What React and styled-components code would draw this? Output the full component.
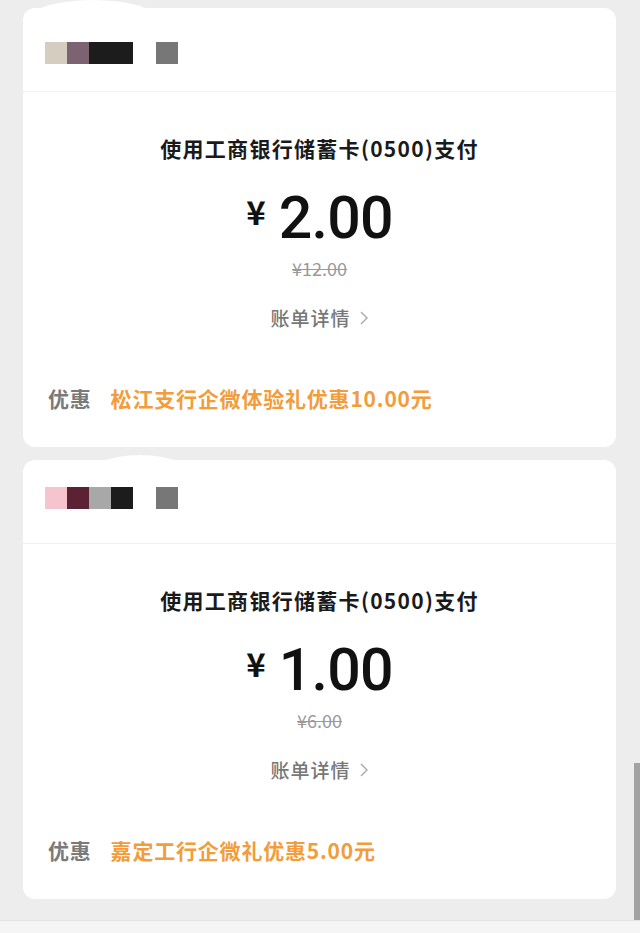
import styled, { createGlobalStyle } from "styled-components";

const GlobalStyle = createGlobalStyle`
  html, body {
    margin: 0;
    padding: 0;
    background: #ededed;
  }
  body {
    font-family: "Noto Sans CJK SC", "Noto Sans", sans-serif;
  }
`;

const Page = styled.div`
  position: relative;
  width: 640px;
  height: 933px;
  overflow: hidden;
  background: #ededed;
  display: flex;
  flex-direction: column;
`;

const List = styled.div`
  display: flex;
  flex-direction: column;
  gap: 13px;
  padding: 8px 24px 0 23px;
  flex: 1;
`;

const Card = styled.div`
  position: relative;
  background: #fff;
  border-radius: 12px;
  height: 439px;
  display: flex;
  flex-direction: column;
`;

// white blur left over from the redacted shop name
const Smudge = styled.div`
  position: absolute;
  top: ${(p) => p.$top}px;
  left: ${(p) => p.$left}px;
  width: ${(p) => p.$width}px;
  height: 24px;
  border-radius: 50% 50% 0 0 / 100% 100% 0 0;
  background: #fff;
`;

const Header = styled.div`
  height: 84px;
  box-sizing: border-box;
  padding: ${(p) => p.$offset}px 0 0 22px;
  border-bottom: 1px solid #f1f1f1;
  display: flex;
  align-items: flex-start;
`;

const Pixel = styled.span`
  display: block;
  width: ${(p) => p.$w || 22}px;
  height: 22px;
  margin-right: ${(p) => p.$gap || 0}px;
  background: ${(p) => p.$color};
`;

const Body = styled.div`
  display: flex;
  flex-direction: column;
  align-items: center;
  padding: 41px 25px 0;
`;

const Title = styled.div`
  font-size: 21px;
  line-height: 30px;
  font-weight: 700;
  letter-spacing: 1.3px;
  color: #1a1a1a;
`;

const Amount = styled.div`
  display: flex;
  align-items: flex-start;
  margin-top: 24px;
  height: 62px;
  color: #111;
`;

const Yen = styled.span`
  font-family: "Noto Sans CJK SC", sans-serif;
  font-size: 33px;
  line-height: 40px;
  font-weight: 700;
  margin: 4px 13px 0 0;
`;

const Digits = styled.span`
  font-family: Roboto, "Noto Sans", sans-serif;
  font-size: 59px;
  line-height: 62px;
  font-weight: 500;
  letter-spacing: -0.8px;
`;

const Original = styled.div`
  margin-top: 7px;
  font-size: 18px;
  line-height: 24px;
  color: #9a9a9a;
  text-decoration: line-through;
  text-decoration-thickness: 1px;
`;

const Details = styled.div`
  margin-top: 24px;
  display: flex;
  align-items: center;
  gap: 8px;
  font-size: 19px;
  line-height: 28px;
  font-weight: 500;
  letter-spacing: 1px;
  color: #777;
`;

const Promo = styled.div`
  align-self: stretch;
  margin-top: 52px;
  display: flex;
  align-items: center;
  gap: 19px;
  font-size: 21px;
  line-height: 28px;
  font-weight: 700;
  letter-spacing: 0.8px;
`;

const PromoLabel = styled.span`
  color: #7a7a7a;
`;

const PromoText = styled.span`
  color: #f29c3a;
`;

const Footer = styled.div`
  height: 13px;
  margin-top: 21px;
  background: #f5f5f5;
  border-top: 1px solid #e2e2e2;
`;

const ScrollThumb = styled.div`
  position: absolute;
  right: 0;
  top: 763px;
  width: 6px;
  height: 157px;
  background: #a3a3a3;
`;

const Chevron = () => (
  <svg width="10" height="16" viewBox="0 0 10 16">
    <polyline
      points="2,2 8,8 2,14"
      fill="none"
      stroke="#a8a8a8"
      strokeWidth="1.4"
    />
  </svg>
);

const orders = [
  {
    offset: 34,
    smudge: { top: -8, left: 0, width: 140 },
    pixels: [
      { color: "#d6cdc1" },
      { color: "#7b6371" },
      { color: "#1c1c1c", w: 44, gap: 23 },
      { color: "#777777" },
    ],
    amount: "2.00",
    original: "¥12.00",
    promo: "松江支行企微体验礼优惠10.00元",
  },
  {
    offset: 27,
    smudge: { top: -5, left: 62, width: 110 },
    pixels: [
      { color: "#f6c4cc" },
      { color: "#5b2233" },
      { color: "#a8a8a8" },
      { color: "#1c1c1c", gap: 23 },
      { color: "#777777" },
    ],
    amount: "1.00",
    original: "¥6.00",
    promo: "嘉定工行企微礼优惠5.00元",
  },
];

const App = () => {
  return (
    <Page>
      <GlobalStyle />
      <List>
        {orders.map((o, i) => (
          <Card key={i}>
            <Smudge
              $top={o.smudge.top}
              $left={o.smudge.left}
              $width={o.smudge.width}
            />
            <Header $offset={o.offset}>
              {o.pixels.map((p, j) => (
                <Pixel key={j} $color={p.color} $w={p.w} $gap={p.gap} />
              ))}
            </Header>
            <Body>
              <Title>使用工商银行储蓄卡(0500)支付</Title>
              <Amount>
                <Yen>¥</Yen>
                <Digits>{o.amount}</Digits>
              </Amount>
              <Original>{o.original}</Original>
              <Details>
                账单详情
                <Chevron />
              </Details>
              <Promo>
                <PromoLabel>优惠</PromoLabel>
                <PromoText>{o.promo}</PromoText>
              </Promo>
            </Body>
          </Card>
        ))}
      </List>
      <Footer />
      <ScrollThumb />
    </Page>
  );
};

export default App;
